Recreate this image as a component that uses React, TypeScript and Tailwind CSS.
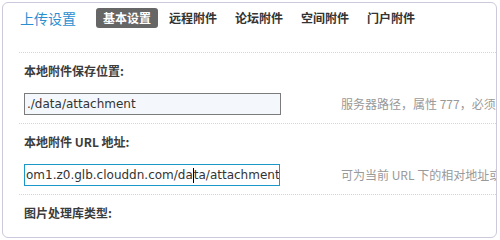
const cjk = {
  fontFamily: '"Noto Sans CJK SC", "Liberation Sans", sans-serif',
};

const mono = {
  fontFamily: '"DejaVu Sans", "Liberation Sans", sans-serif',
};

const tabs = ["基本设置", "远程附件", "论坛附件", "空间附件", "门户附件"];

function Label({ children }: { children: React.ReactNode }) {
  return (
    <div className="flex h-[36px] items-center pl-[5px] text-[12px] font-bold text-[#3c3c3c]">
      {children}
    </div>
  );
}

function Hint({ children }: { children: React.ReactNode }) {
  return (
    <div className="h-[22px] whitespace-nowrap text-[12px] leading-[22px] text-[#999]">
      {children}
    </div>
  );
}

export default function App() {
  return (
    <div className="h-[240px] w-[500px] bg-white" style={cjk}>
      <div className="ml-[2px] mt-[2px] h-[236px] w-[495px] overflow-hidden rounded-[6px] border border-[#ccc9dc] bg-white">
        <div className="pl-[16px]">
          {/* Header */}
          <div className="flex h-[49px] items-start pt-[5px]">
            <h3 className="ml-[1px] flex h-[20px] items-center text-[14px] font-normal text-[#2a8fd0]">
              上传设置
            </h3>
            <ul className="ml-[20px] flex gap-[4px]">
              {tabs.map((t, i) => (
                <li
                  key={t}
                  className={`flex h-[20px] items-center rounded-[3px] px-[7px] text-[12px] font-bold ${
                    i === 0 ? "bg-[#666] text-white" : "text-[#333]"
                  }`}
                >
                  {t}
                </li>
              ))}
            </ul>
          </div>

          {/* 本地附件保存位置 */}
          <div className="border-t border-dotted border-[#c6d9ea]">
            <Label>本地附件保存位置:</Label>
            <div className="flex h-[34px] items-start pt-[4px]">
              <div className="w-[322px] shrink-0 pl-[5px]">
                <div
                  className="flex h-[22px] w-[257px] items-center overflow-hidden whitespace-nowrap border border-[#7b7b7b] bg-[#f4f8fc] pl-[2px] text-[12px] text-[#333]"
                  style={mono}
                >
                  ./data/attachment
                </div>
              </div>
              <Hint>服务器路径，属性 777，必须</Hint>
            </div>
          </div>

          {/* 本地附件 URL 地址 */}
          <div className="border-t border-dotted border-[#c6d9ea]">
            <Label>本地附件 URL 地址:</Label>
            <div className="flex h-[34px] items-start pt-[4px]">
              <div className="w-[322px] shrink-0 pl-[5px]">
                <div
                  className="flex h-[22px] w-[256px] items-center overflow-hidden whitespace-nowrap border border-[#1b97c8] bg-white pl-[1px] text-[12px] text-[#333]"
                  style={mono}
                >
                  om1.z0.glb.clouddn.com/da
                  <span className="inline-block h-[15px] w-0 border-l border-black" />
                  ta/attachment
                </div>
              </div>
              <Hint>可为当前 URL 下的相对地址或</Hint>
            </div>
          </div>

          {/* 图片处理库类型 */}
          <div className="border-t border-dotted border-[#c6d9ea]">
            <Label>图片处理库类型:</Label>
          </div>
        </div>
      </div>
    </div>
  );
}
